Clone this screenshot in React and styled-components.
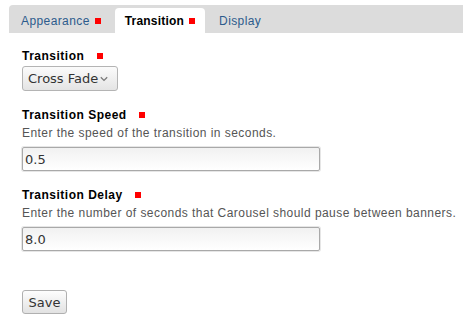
import React, { useState } from 'react';
import styled, { createGlobalStyle } from 'styled-components';

const GlobalStyle = createGlobalStyle`
  html, body {
    margin: 0;
    padding: 0;
    background: #fff;
  }
  body {
    font-family: "Liberation Sans", Arial, sans-serif;
    font-size: 12px;
    color: #000;
  }
`;

const Page = styled.div`
  padding: 5px 0 0 9px;
`;

const TabBar = styled.ul`
  display: flex;
  align-items: flex-end;
  gap: 4px;
  height: 28px;
  margin: 0;
  padding: 0 0 0 2px;
  list-style: none;
  background: #dcdcdc;
  border-top-left-radius: 4px;
`;

const Tab = styled.li`
  display: flex;
  align-items: center;
  height: 25px;
  padding: 0 10px;
  border-radius: 4px 4px 0 0;
  background: ${props => props.active ? '#fff' : 'transparent'};
  color: ${props => props.active ? '#000' : '#2c5b8c'};
  font-weight: ${props => props.active ? 'bold' : 'normal'};
  letter-spacing: ${props => props.active ? '0.2px' : '0.4px'};
  cursor: pointer;
`;

const Marker = styled.span`
  display: inline-block;
  width: 6px;
  height: 6px;
  background: #f00;
  margin-left: ${props => props.gap || 5}px;
  flex-shrink: 0;
`;

const Form = styled.form`
  padding: 15px 0 0 13px;
`;

const Item = styled.div`
  & + & {
    margin-top: 16px;
  }
`;

const Label = styled.label`
  display: flex;
  align-items: center;
  height: 16px;
  font-weight: bold;
  letter-spacing: 0.5px;
  margin-bottom: 2px;
`;

const Description = styled.div`
  line-height: 16px;
  color: #555;
  letter-spacing: 0.45px;
  margin-bottom: 6px;
`;

const SelectBox = styled.div`
  display: inline-flex;
  align-items: center;
  box-sizing: border-box;
  height: 25px;
  padding: 0 9px 0 5px;
  border: 1px solid #b4b4b4;
  border-radius: 3px;
  background: linear-gradient(#fbfbfb, #e4e4e4);
  color: #333;

  select {
    appearance: none;
    -webkit-appearance: none;
    border: none;
    background: transparent;
    padding: 0;
    margin: 0;
    font-family: "DejaVu Sans", sans-serif;
    font-size: 13px;
    color: #333;
    outline: none;
  }
`;

const TextInput = styled.input`
  display: block;
  box-sizing: border-box;
  width: 298px;
  height: 24px;
  margin: 0;
  padding: 0 2px;
  border: 1px solid #a9a9a9;
  border-radius: 2px;
  box-shadow: 0 0 0 1px #e6e6e6;
  background: linear-gradient(#f1f1f1, #fff);
  font-family: "DejaVu Sans", sans-serif;
  font-size: 13px;
  color: #333;
  outline: none;
`;

const Actions = styled.div`
  margin-top: 39px;
`;

const Button = styled.button`
  box-sizing: border-box;
  width: 45px;
  height: 24px;
  padding: 0;
  border: 1px solid #b0b0b0;
  border-radius: 3px;
  background: linear-gradient(#fdfdfd, #e2e2e2);
  font-family: "DejaVu Sans", sans-serif;
  font-size: 13px;
  color: #333;
  cursor: pointer;
`;

const Chevron = () => (
  <svg width="8" height="6" viewBox="0 0 8 6" style={{ marginLeft: 1 }}>
    <path d="M0.8 1.2 L4 4.4 L7.2 1.2" fill="none" stroke="#7a7a7a" strokeWidth="1.3" />
  </svg>
);

export default function App() {
  const [tab, setTab] = useState('transition');
  const [speed, setSpeed] = useState('0.5');
  const [delay, setDelay] = useState('8.0');

  return (
    <Page>
      <GlobalStyle />
      <TabBar>
        <Tab active={tab === 'appearance'} onClick={() => setTab('appearance')}>
          Appearance<Marker />
        </Tab>
        <Tab active={tab === 'transition'} onClick={() => setTab('transition')}>
          Transition<Marker />
        </Tab>
        <Tab active={tab === 'display'} onClick={() => setTab('display')}>
          Display
        </Tab>
      </TabBar>

      <Form onSubmit={e => e.preventDefault()}>
        <Item>
          <Label>Transition<Marker gap={13} /></Label>
          <SelectBox>
            <select defaultValue="fade">
              <option value="fade">Cross Fade</option>
              <option value="slide">Slide</option>
            </select>
            <Chevron />
          </SelectBox>
        </Item>

        <Item>
          <Label>Transition Speed<Marker gap={12} /></Label>
          <Description>Enter the speed of the transition in seconds.</Description>
          <TextInput value={speed} onChange={e => setSpeed(e.target.value)} />
        </Item>

        <Item>
          <Label>Transition Delay<Marker gap={12} /></Label>
          <Description>Enter the number of seconds that Carousel should pause between banners.</Description>
          <TextInput value={delay} onChange={e => setDelay(e.target.value)} />
        </Item>

        <Actions>
          <Button type="submit">Save</Button>
        </Actions>
      </Form>
    </Page>
  );
}
